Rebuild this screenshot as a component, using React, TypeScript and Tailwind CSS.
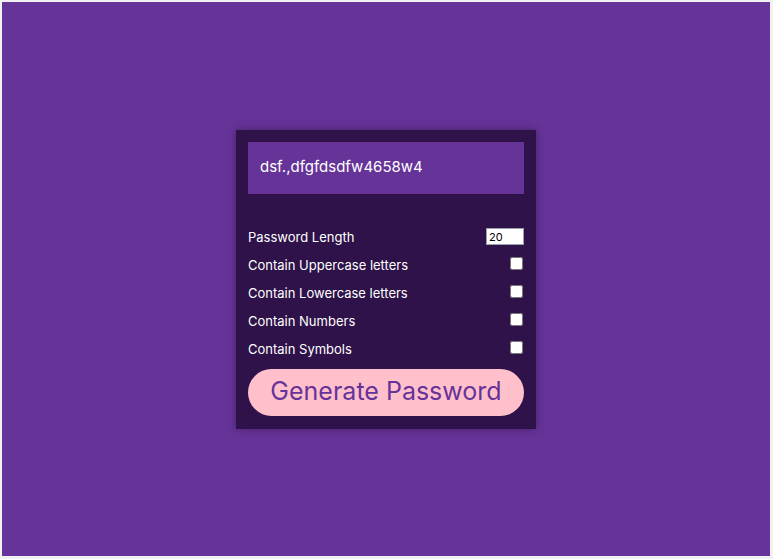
import React from "react";

const options = [
  "Contain Uppercase letters",
  "Contain Lowercase letters",
  "Contain Numbers",
  "Contain Symbols",
];

const App: React.FC = () => {
  return (
    <div className="h-[559px] w-[773px] bg-[#f1f1f3] pt-[2px] pl-[2px]">
      <div
        className="flex h-[554px] w-[768px] items-center justify-center bg-[#663399]"
        style={{ fontFamily: "Inter, 'Noto Sans', sans-serif" }}
      >
        <div className="w-[300px] bg-[#2e1249] px-3 pt-3 pb-[13px] shadow-[0_0_8px_rgba(0,0,0,0.35)]">
          {/* Result */}
          <div className="flex h-[52px] items-center bg-[#663399] px-3 text-[15px] text-white">
            dsf.,dfgfdsdfw4658w4
          </div>

          {/* Settings */}
          <div className="mt-[30px] text-[13px] text-white">
            <div className="flex h-7 items-center justify-between">
              <span>Password Length</span>
              <input
                type="number"
                defaultValue={20}
                className="-mt-[2px] h-[17px] w-[38px] border border-gray-400 bg-white px-[2px] text-[11px] text-black"
              />
            </div>
            {options.map((o) => (
              <div key={o} className="flex h-7 items-center justify-between">
                <span>{o}</span>
                <input type="checkbox" className="mr-[1px] mb-1 h-[13px] w-[13px]" />
              </div>
            ))}
          </div>

          {/* Button */}
          <button className="mt-[5px] h-[47px] w-full rounded-full bg-[#ffc0cb] text-[25px] text-[#663399]">
            Generate Password
          </button>
        </div>
      </div>
    </div>
  );
};

export default App;
